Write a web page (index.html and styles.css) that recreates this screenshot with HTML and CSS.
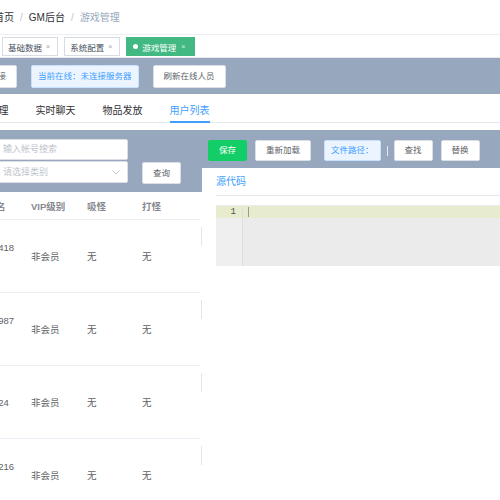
FILE: index.html
```html
<!DOCTYPE html>
<html lang="zh-CN">
<head>
<meta charset="utf-8">
<title>游戏管理</title>
<link rel="stylesheet" href="styles.css">
</head>
<body>
<div class="page">
  <div class="navbar">
    <div class="breadcrumb">
      <span class="crumb">首页</span><span class="sep">/</span><span class="crumb">GM后台</span><span class="sep">/</span><span class="crumb current">游戏管理</span>
    </div>
  </div>

  <div class="tags">
    <span class="tag">首页</span>
    <span class="tag">基础数据<i class="close">×</i></span>
    <span class="tag">系统配置<i class="close">×</i></span>
    <span class="tag active"><i class="dot"></i>游戏管理<i class="close">×</i></span>
  </div>

  <div class="status-bar">
    <button class="btn">重新连接</button>
    <span class="info-tag">当前在线：未连接服务器</span>
    <button class="btn">刷新在线人员</button>
  </div>

  <div class="tabs">
    <div class="tab">服务器管理</div>
    <div class="tab">实时聊天</div>
    <div class="tab">物品发放</div>
    <div class="tab active">用户列表</div>
  </div>

  <div class="panels">
    <div class="left">
      <div class="filter">
        <div class="fields">
          <div class="field">输入帐号搜索</div>
          <div class="field select">请选择类别
            <svg class="chevron" width="8" height="5" viewBox="0 0 8 5"><path d="M0.5 0.5 L4 4 L7.5 0.5" fill="none" stroke="#c0c4cc" stroke-width="1"/></svg>
          </div>
        </div>
        <button class="btn small">查询</button>
      </div>
      <div class="table">
        <div class="row head">
          <div class="cell">用户名</div>
          <div class="cell">VIP级别</div>
          <div class="cell">吸怪</div>
          <div class="cell">打怪</div>
        </div>
        <div class="row">
          <div class="cell id"><span>1000418</span><span>玩家</span></div>
          <div class="cell">非会员</div>
          <div class="cell">无</div>
          <div class="cell">无</div>
        </div>
        <div class="row">
          <div class="cell id"><span>1000987</span><span>玩家</span></div>
          <div class="cell">非会员</div>
          <div class="cell">无</div>
          <div class="cell">无</div>
        </div>
        <div class="row">
          <div class="cell id"><span>100024</span></div>
          <div class="cell">非会员</div>
          <div class="cell">无</div>
          <div class="cell">无</div>
        </div>
        <div class="row">
          <div class="cell id"><span>1000216</span><span>玩家</span></div>
          <div class="cell">非会员</div>
          <div class="cell">无</div>
          <div class="cell">无</div>
        </div>
      </div>
    </div>

    <div class="right">
      <div class="toolbar">
        <button class="btn success">保存</button>
        <button class="btn">重新加载</button>
        <span class="info-tag path">文件路径：</span>
        <span class="divider"></span>
        <button class="btn">查找</button>
        <button class="btn">替换</button>
      </div>
      <div class="card">
        <div class="card-title"><span>源代码</span></div>
        <div class="code">
          <div class="gutter"><div class="ln active">1</div></div>
          <div class="lines"><div class="line active"><span class="cursor"></span></div></div>
        </div>
      </div>
    </div>
  </div>
</div>
</body>
</html>
```

FILE: styles.css
```css
* { box-sizing: border-box; }

html, body {
  margin: 0;
  padding: 0;
  background: #fff;
}

body {
  width: 500px;
  height: 500px;
  overflow: hidden;
  font-family: "Liberation Sans", "Noto Sans CJK SC", sans-serif;
  color: #303133;
}

.page {
  width: 500px;
  height: 500px;
  overflow: hidden;
}

/* navbar / breadcrumb */
.navbar {
  height: 35px;
  border-bottom: 1px solid #eceef1;
}

.breadcrumb {
  margin-left: -6px;
  font-size: 10px;
  line-height: 35px;
  white-space: nowrap;
}

.crumb { color: #303133; }
.crumb.current { color: #97a8be; }
.sep { color: #c0c4cc; margin: 0 6px; }

/* tags view */
.tags {
  height: 23px;
  display: flex;
  align-items: flex-start;
  gap: 6px;
  padding-top: 2px;
  margin-left: -35px;
  border-bottom: 1px solid #e6e8ec;
  white-space: nowrap;
}

.tag {
  height: 19px;
  display: inline-flex;
  align-items: center;
  gap: 4px;
  padding: 0 7px 0 5px;
  border: 1px solid #d8dce5;
  background: #fff;
  color: #495060;
  font-size: 8.5px;
}

.tag .close {
  font-style: normal;
  font-size: 7px;
  color: #a0a6b0;
}

.tag.active {
  background: #42b983;
  border-color: #42b983;
  color: #fff;
  padding: 0 9px 0 6px;
}

.tag.active .close { color: #d5f0e3; margin-left: 1px; }

.dot {
  width: 5px;
  height: 5px;
  border-radius: 50%;
  background: #fff;
  margin-right: 0;
}

/* status bar */
.status-bar {
  height: 36px;
  background: #97a8be;
  display: flex;
  align-items: center;
  gap: 14px;
  margin-left: -39px;
}

.btn {
  height: 23px;
  padding: 0 10px;
  border: 1px solid #dcdfe6;
  border-radius: 2px;
  background: #fff;
  color: #606266;
  font-family: inherit;
  font-size: 8.5px;
  line-height: 21px;
  white-space: nowrap;
  cursor: pointer;
}

.info-tag {
  height: 23px;
  padding: 0 6px;
  border: 1px solid #c6e2ff;
  border-radius: 2px;
  background: #ecf5ff;
  color: #409eff;
  font-size: 8.5px;
  line-height: 21px;
  white-space: nowrap;
}

/* tabs */
.tabs {
  height: 36px;
  padding-top: 6px;
  display: flex;
  margin-left: -55px;
  position: relative;
}

.tabs::after {
  content: "";
  position: absolute;
  left: 0;
  right: 0;
  top: 28px;
  height: 1px;
  background: #e4e7ed;
}

.tab {
  height: 22px;
  line-height: 22px;
  padding: 0 13.5px;
  font-size: 10px;
  color: #303133;
  white-space: nowrap;
  position: relative;
}

.tab.active { color: #409eff; }

.tab.active::after {
  content: "";
  position: absolute;
  left: 13.5px;
  right: 13.5px;
  bottom: -1px;
  height: 2px;
  background: #409eff;
  z-index: 1;
}

/* panels */
.panels {
  display: flex;
  align-items: flex-start;
}

.left {
  flex: 0 0 233px;
  margin-left: -31px;
}

.filter {
  background: #97a8be;
  padding: 9px 0 9px 23px;
  display: flex;
  align-items: flex-end;
  gap: 14px;
}

.fields {
  width: 136px;
  display: flex;
  flex-direction: column;
  gap: 1px;
}

.field {
  height: 21px;
  padding-left: 10px;
  border: 1px solid #dcdfe6;
  border-radius: 2px;
  background: #fff;
  color: #c0c4cc;
  font-size: 9px;
  line-height: 19px;
  white-space: nowrap;
  display: flex;
  align-items: center;
}

.field.select {
  height: 22px;
  justify-content: space-between;
  padding-right: 7px;
}

.chevron { display: block; }

.btn.small {
  height: 22px;
  line-height: 20px;
  margin-bottom: -1px;
}

.table {
  width: 231px;
  background: #fff;
}

.row {
  display: grid;
  grid-template-columns: 54px 56px 55px 66px;
  height: 73px;
  border-bottom: 1px solid #ebeef5;
  align-items: center;
  position: relative;
  font-size: 9.5px;
  color: #606266;
}

.row:not(.head)::after {
  content: "";
  position: absolute;
  right: -2px;
  top: 7px;
  width: 1px;
  height: 19px;
  background: #e3e5ea;
}

.row.head {
  height: 28px;
  color: #86898f;
  font-weight: 600;
  font-size: 9.5px;
}

.cell {
  padding-left: 8px;
  white-space: nowrap;
}

.cell.id {
  display: flex;
  flex-direction: column;
  line-height: 17px;
}

/* right panel */
.right {
  flex: 1;
  min-width: 0;
}

.toolbar {
  height: 38px;
  background: #97a8be;
  padding: 10px 0 0 6px;
  display: flex;
  align-items: flex-start;
  gap: 8px;
}

.toolbar .btn,
.toolbar .info-tag {
  height: 21px;
  line-height: 19px;
}

.btn.success {
  background: #13ce66;
  border-color: #13ce66;
  color: #fff;
}

.info-tag.path {
  margin-left: 5px;
  padding: 0 6px;
}

.divider {
  width: 1px;
  height: 10px;
  margin: 6px -2px 0;
  background: #e6eaf0;
}

.card {
  background: #fff;
  height: 340px;
  padding-left: 14px;
}

.card-title {
  height: 28px;
  border-bottom: 1px solid #e4e7ed;
  font-size: 10px;
  line-height: 27px;
  color: #409eff;
}

.code {
  margin-top: 9px;
  height: 61px;
  padding-top: 1px;
  background: #ebebeb;
  display: flex;
}

.gutter {
  width: 27px;
  border-right: 1px solid #dedede;
  background: #efefef;
}

.ln {
  height: 12px;
  line-height: 12px;
  text-align: right;
  padding-right: 6px;
  font-family: "Liberation Mono", monospace;
  font-size: 9px;
  color: #555;
}

.ln.active,
.line.active {
  background: #e7ecce;
}

.lines { flex: 1; }

.line {
  height: 12px;
  padding-left: 5px;
  display: flex;
  align-items: center;
}

.cursor {
  width: 1px;
  height: 10px;
  background: #999;
}
```
